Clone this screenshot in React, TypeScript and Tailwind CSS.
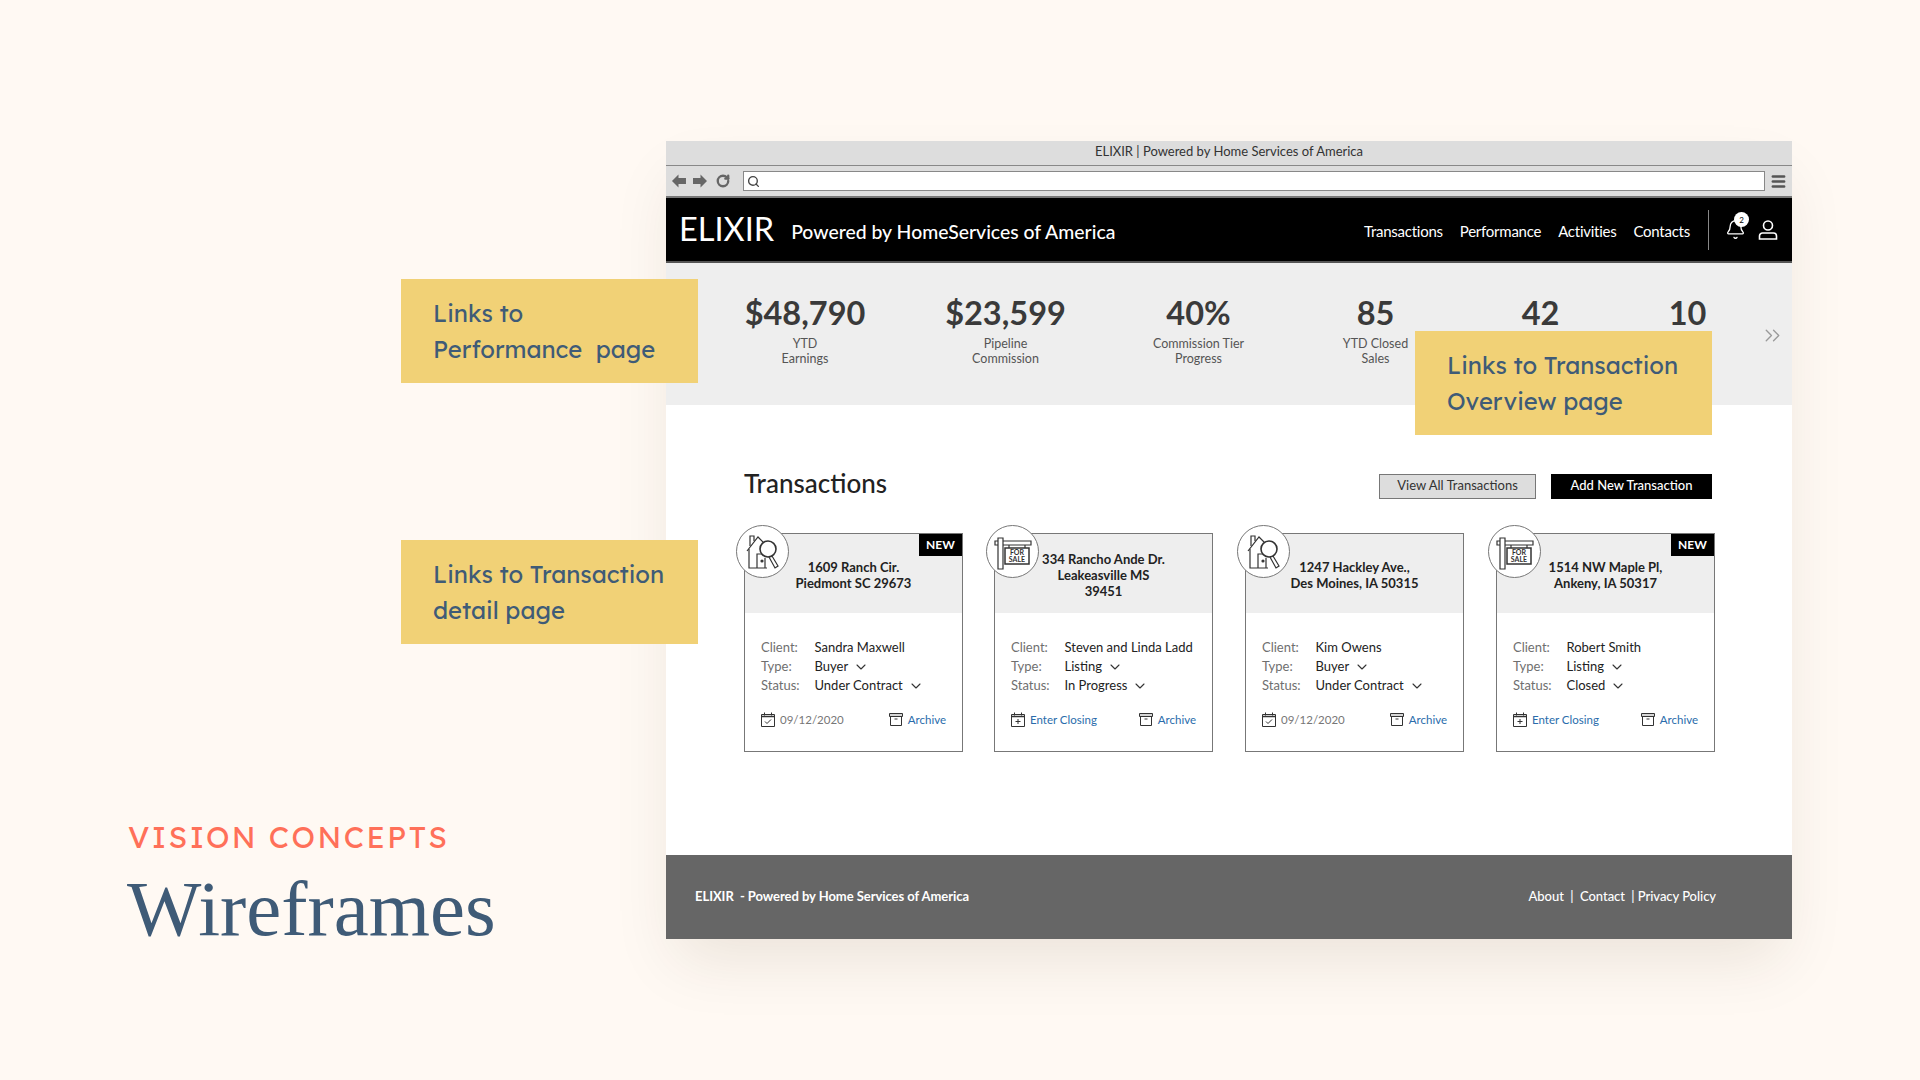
import React from 'react';
import { Bell, ChevronDown, ChevronsRight, Menu, RotateCw, Search } from 'lucide-react';

const lato = { fontFamily: 'Lato, sans-serif' };

const HouseIcon = () => (
    <svg viewBox="0 0 53 53" className="w-[53px] h-[53px]" fill="none" stroke="#333" strokeWidth="1.2">
        <path d="M13 20V10h4v5" />
        <path d="M10 25 L21 11 L27 17" />
        <path d="M12 23V42H30" />
        <path d="M20 42V28h7M28 42V32" />
        <circle cx="25" cy="35" r="1" fill="#333" />
        <circle cx="31" cy="23" r="8" fill="#fff" strokeWidth="1.6" />
        <path d="M35 30 L41 40 L38 42 L32 31" />
    </svg>
);

const ForSaleIcon = () => (
    <svg viewBox="0 0 53 53" className="w-[53px] h-[53px]" fill="none" stroke="#333" strokeWidth="1.2">
        <path d="M8 15h36v4H8z" />
        <path d="M11 12h5v31h-5z" fill="#fff" />
        <path d="M22 19v3M38 19v3" />
        <path d="M18 22h24v16H18z" strokeWidth="1.5" />
        <text x="30" y="29" textAnchor="middle" fontSize="7" fontFamily="Lato, sans-serif" fontWeight="700" fill="#333" stroke="none">FOR</text>
        <text x="30" y="36" textAnchor="middle" fontSize="7" fontFamily="Lato, sans-serif" fontWeight="700" fill="#333" stroke="none">SALE</text>
    </svg>
);

const ArchiveIcon = () => (
    <svg viewBox="0 0 14 13" className="w-[14px] h-[13px]" fill="none" stroke="#333" strokeWidth="1">
        <path d="M.5.5h13v3H.5z" fill="#333" fillOpacity="0.2" />
        <path d="M1.5 3.5v9h11v-9" />
        <path d="M5.5 6h3" />
    </svg>
);

const CalendarIcon = ({ plus }: { plus?: boolean }) => (
    <svg viewBox="0 0 14 15" className="w-[14px] h-[15px]" fill="none" stroke="#333" strokeWidth="1">
        <path d="M.5 2.5h13v12H.5z" />
        <path d="M.5 4.5h13" strokeWidth="1.5" />
        <path d="M3.5 .5v3M10.5 .5v3" />
        {plus ? <path d="M7 7v5M4.5 9.5h5" /> : <path d="M4 9.5l2 2 4-4" />}
    </svg>
);

const BlockArrow = ({ flip }: { flip?: boolean }) => (
    <svg viewBox="0 0 16 14" className={`w-[16px] h-[14px] ${flip ? '-scale-x-100' : ''}`} fill="#666">
        <path d="M7.5 .5 L1 7 L7.5 13.5 V10 H15 V4 H7.5 Z" />
    </svg>
);

type Card = {
    address: string[];
    client: string;
    type: string;
    status: string;
    icon: 'house' | 'sale';
    isNew?: boolean;
    date?: string;
    offset: string;
};

const cards: Card[] = [
    { address: ['1609 Ranch Cir.', 'Piedmont SC 29673'], client: 'Sandra Maxwell', type: 'Buyer', status: 'Under Contract', icon: 'house', isNew: true, date: '09/12/2020', offset: 'ml-0' },
    { address: ['334 Rancho Ande Dr.', 'Leakeasville MS', '39451'], client: 'Steven and Linda Ladd', type: 'Listing', status: 'In Progress', icon: 'sale', offset: 'ml-[31px]' },
    { address: ['1247 Hackley Ave.,', 'Des Moines, IA 50315'], client: 'Kim Owens', type: 'Buyer', status: 'Under Contract', icon: 'house', date: '09/12/2020', offset: 'ml-[32px]' },
    { address: ['1514 NW Maple Pl,', 'Ankeny, IA 50317'], client: 'Robert Smith', type: 'Listing', status: 'Closed', icon: 'sale', isNew: true, offset: 'ml-[32px]' },
];

const TransactionCard = ({ card }: { card: Card }) => (
    <div className={`relative shrink-0 w-[219px] h-[219px] border border-[#777] bg-white ${card.offset}`}>
        <div className="h-[79px] bg-[#eeeeee] flex flex-col items-center justify-center pt-[2px] text-[13px] leading-[16px] font-bold text-[#222]">
            {card.address.map((line) => (
                <div key={line}>{line}</div>
            ))}
        </div>
        {/* round icon sits over the corner */}
        <div className="absolute -left-[9px] -top-[9px] w-[53px] h-[53px] rounded-full border border-[#777] bg-white">
            {card.icon === 'house' ? <HouseIcon /> : <ForSaleIcon />}
        </div>
        {card.isNew && (
            <div className="absolute right-0 top-0 w-[43px] h-[22px] bg-black text-white text-[12px] font-bold flex items-center justify-center">NEW</div>
        )}
        <div className="pl-[16px] pr-[16px] pt-[25px] text-[13px] leading-[19px] text-[#222]">
            <div className="flex">
                <span className="w-[53.5px] text-[#6f6f6f]">Client:</span>
                <span>{card.client}</span>
            </div>
            <div className="flex items-center">
                <span className="w-[53.5px] text-[#6f6f6f]">Type:</span>
                <span>{card.type}</span>
                <ChevronDown className="w-[16px] h-[16px] ml-[5px] text-[#333]" strokeWidth={1.6} />
            </div>
            <div className="flex items-center">
                <span className="w-[53.5px] text-[#6f6f6f]">Status:</span>
                <span>{card.status}</span>
                <ChevronDown className="w-[16px] h-[16px] ml-[5px] text-[#333]" strokeWidth={1.6} />
            </div>
            <div className="flex items-center justify-between mt-[15px] text-[11.5px]">
                {card.date ? (
                    <div className="flex items-center gap-[5px] text-[#777]">
                        <CalendarIcon />
                        <span>{card.date}</span>
                    </div>
                ) : (
                    <div className="flex items-center gap-[5px] text-[#2a6cab]">
                        <CalendarIcon plus />
                        <span>Enter Closing</span>
                    </div>
                )}
                <div className="flex items-center gap-[5px] text-[#2a6cab]">
                    <ArchiveIcon />
                    <span>Archive</span>
                </div>
            </div>
        </div>
    </div>
);

const Stat = ({ value, label, width }: { value: string; label?: string[]; width: string }) => (
    <div className={`${width} shrink-0 text-center`}>
        <div className="text-[32.5px] leading-[40px] font-bold text-[#3a3a3a]">{value}</div>
        {label && (
            <div className="text-[12.5px] leading-[15px] text-[#555] mt-[3px]">
                {label.map((line) => (
                    <div key={line}>{line}</div>
                ))}
            </div>
        )}
    </div>
);

const Callout = ({ lines, className }: { lines: string[]; className: string }) => (
    <div className={`absolute w-[297px] h-[104px] bg-[#f1d176] pl-[32px] flex flex-col justify-center text-[23.8px] leading-[36px] text-[#3f5b77] ${className}`} style={{ fontFamily: 'Lexend, Inter, sans-serif' }}>
        {lines.map((line) => (
            <div key={line} className="whitespace-pre">{line}</div>
        ))}
    </div>
);

export default function App() {
    return (
        <div className="relative w-[1920px] h-[1080px] overflow-hidden bg-[#fff9f3] flex">
            {/* Left title */}
            <div className="w-[666px] shrink-0 pl-[128px] pt-[815px]">
                <div className="text-[30px] leading-[44px] tracking-[2.4px] text-[#ff7059]" style={{ fontFamily: 'Lexend, Inter, sans-serif' }}>VISION CONCEPTS</div>
                <div className="text-[78.8px] leading-[86px] text-[#3f5b77] mt-[7px] -ml-[1px]" style={{ fontFamily: '"Liberation Serif", serif' }}>Wireframes</div>
            </div>

            {/* Browser mockup */}
            <div className="w-[1126px] h-[798px] mt-[141px] bg-white flex flex-col shadow-[0_30px_60px_-10px_rgba(60,40,10,0.1)]" style={lato}>
                <div className="h-[25px] pb-[2px] bg-[#dddddd] border-b border-[#888] flex items-center justify-center text-[13px] text-[#333]">
                    ELIXIR | Powered by Home Services of America
                </div>
                <div className="h-[32px] bg-[#dddddd] border-b-2 border-[#777] flex items-center pl-[5px] pr-[5px]">
                    <BlockArrow />
                    <div className="ml-[5px]"><BlockArrow flip /></div>
                    <RotateCw className="w-[14px] h-[14px] ml-[8px] text-[#666]" strokeWidth={4} />
                    <div className="w-[1024px] h-[20px] ml-[13px] bg-white border border-[#888] flex items-center pl-[3px]">
                        <Search className="w-[13px] h-[13px] text-[#444]" strokeWidth={2.5} />
                    </div>
                    <Menu className="w-[17px] h-[17px] ml-[5px] text-[#555]" strokeWidth={3.5} />
                </div>
                <div className="h-[65px] bg-black border-b-2 border-[#555] flex items-center text-white">
                    <span className="ml-[13px] text-[32.5px]">ELIXIR</span>
                    <span className="ml-[17px] text-[19.4px] font-medium mt-[5px]">Powered by HomeServices of America</span>
                    <div className="ml-auto flex items-center h-full">
                        <div className="flex gap-[17px] text-[15px] tracking-[-0.25px] mt-[3px]">
                            <span>Transactions</span>
                            <span>Performance</span>
                            <span>Activities</span>
                            <span>Contacts</span>
                        </div>
                        <div className="w-px h-[40px] bg-[#888] ml-[18px]" />
                        <div className="relative ml-[16px]">
                            <Bell className="w-[21px] h-[21px]" strokeWidth={1.5} />
                            <div className="absolute -top-[7px] left-[9px] w-[15px] h-[15px] rounded-full bg-white text-black text-[8px] flex items-center justify-center">2</div>
                        </div>
                        <svg viewBox="0 0 20 20" className="w-[20px] h-[20px] ml-[12px] mr-[14px]" fill="none" stroke="#fff" strokeWidth="1.6">
                            <circle cx="10" cy="5.5" r="4.5" />
                            <path d="M1.5 19v-3a3 3 0 0 1 3-3h11a3 3 0 0 1 3 3v3z" />
                        </svg>
                    </div>
                </div>

                {/* Stats */}
                <div className="relative h-[142px] bg-[#eeeeee] flex pt-[30px] pl-[59px]">
                    <Stat value="$48,790" label={['YTD', 'Earnings']} width="w-[160px]" />
                    <Stat value="$23,599" label={['Pipeline', 'Commission']} width="w-[241px]" />
                    <Stat value="40%" label={['Commission Tier', 'Progress']} width="w-[145px]" />
                    <Stat value="85" label={['YTD Closed', 'Sales']} width="w-[209px]" />
                    <Stat value="42" width="w-[121px]" />
                    <Stat value="10" width="w-[173px]" />
                    <ChevronsRight className="absolute right-[7px] top-[60px] w-[25px] h-[25px] text-[#999]" strokeWidth={1.3} />
                </div>

                {/* Transactions */}
                <div className="flex-1 pl-[78px] pr-[80px] pt-[64px]">
                    <div className="flex items-center h-[34px]">
                        <h2 className="text-[26px] font-medium text-[#222] pb-[5px]">Transactions</h2>
                        <button className="ml-auto w-[157px] h-[25px] bg-[#dddddd] border border-[#777] text-[13px] text-[#333]">View All Transactions</button>
                        <button className="ml-[15px] w-[161px] h-[25px] bg-black text-white text-[13px] font-medium">Add New Transaction</button>
                    </div>
                    <div className="flex mt-[30px]">
                        {cards.map((card) => (
                            <TransactionCard key={card.client} card={card} />
                        ))}
                    </div>
                </div>

                <div className="h-[84px] bg-[#666666] flex items-center justify-between pl-[29px] pr-[76px] text-[13px] font-bold text-white tracking-[-0.05px]">
                    <span>ELIXIR&nbsp; - Powered by Home Services of America</span>
                    <span className="font-medium">About &nbsp;|&nbsp; Contact &nbsp;| Privacy Policy</span>
                </div>
            </div>

            {/* Annotations over the mockup */}
            <Callout lines={['Links to', 'Performance  page']} className="left-[401px] top-[279px]" />
            <Callout lines={['Links to Transaction', 'detail page']} className="left-[401px] top-[540px]" />
            <Callout lines={['Links to Transaction', 'Overview page']} className="left-[1415px] top-[331px]" />
        </div>
    );
}
